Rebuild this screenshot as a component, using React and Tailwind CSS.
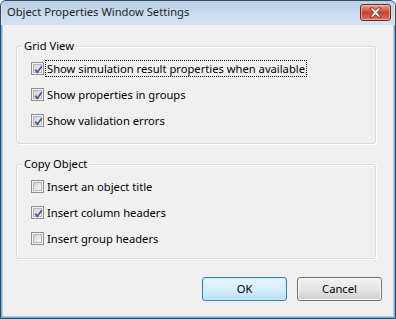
import React from "react";

function CheckBox({ checked }) {
  return (
    <div className="w-[13px] h-[13px] border border-[#8e8f8f] bg-[#f4f4f4] p-[1px] shrink-0">
      <div className="w-full h-full bg-gradient-to-br from-[#c9cdd3] via-[#e4e6e9] to-[#fbfbfb] border border-[#b3b7bd] relative">
        {checked && (
          <svg className="absolute left-[-1px] top-[-1px]" width="11" height="11" viewBox="0 0 11 11">
            <path d="M2.2 5.6 L4.3 8.2 L8.8 2.2" fill="none" stroke="#4b5f93" strokeWidth="1.9" strokeLinecap="butt" strokeLinejoin="miter" />
          </svg>
        )}
      </div>
    </div>
  );
}

function Row({ checked, label, focused }) {
  return (
    <div className="flex items-center h-[17px]">
      <CheckBox checked={checked} />
      <span
        className={
          "ml-[2px] px-[1px] leading-[15px] text-[11.2px] text-black whitespace-nowrap " +
          (focused ? "outline outline-1 outline-dotted outline-black" : "")
        }
      >
        {label}
      </span>
    </div>
  );
}

function Group({ title, heightClass, children }) {
  return (
    <div className={"relative ml-[13px] mr-[17px] border border-[#d5dfe5] rounded-[3px] shadow-[inset_1px_1px_0_#ffffff,1px_1px_0_#ffffff] " + heightClass}>
      <span className="absolute left-[5px] top-[-9px] px-[2px] bg-[#f0f0f0] text-[11.2px] leading-[16px] text-black">
        {title}
      </span>
      <div className="flex flex-col pl-[14px] pt-[13px] gap-[9px]">{children}</div>
    </div>
  );
}

export default function App() {
  return (
    <div
      className="w-[396px] h-[319px] bg-white"
      style={{ fontFamily: '"Noto Sans", "Open Sans", sans-serif' }}
    >
      <div className="w-full h-full flex flex-col border border-[#3b4754] rounded-t-[6px] bg-[#6aaee0] overflow-hidden">
        <div className="h-[24px] shrink-0 flex items-start justify-between bg-gradient-to-b from-[#b9d1ea] to-[#d6e4f3] border-x border-[#dbe8f5]">
          <span className="pl-[5px] pt-[3px] text-[11.2px] leading-[16px] text-[#1e1e1e]">
            Object Properties Window Settings
          </span>
          <div className="mt-[3px] mr-[3px] w-[31px] h-[17px] rounded-[3px] border border-[#6e2a20] bg-gradient-to-b from-[#e6a08f] via-[#c8412b] to-[#d6745f] flex items-center justify-center shadow-[inset_0_0_0_1px_rgba(255,220,210,0.5)]">
            <svg width="13" height="11" viewBox="0 0 13 11">
              <path
                d="M1 1 H4.2 L6.5 3.6 L8.8 1 H12 L8.2 5.5 L12 10 H8.8 L6.5 7.4 L4.2 10 H1 L4.8 5.5 Z"
                fill="#ffffff"
                stroke="#5a2a24"
                strokeWidth="0.8"
              />
            </svg>
          </div>
        </div>
        <div className="flex-1 mx-[1px] mb-[1px] border-x border-b border-[#a8d2f0]">
          <div className="h-full bg-[#f0f0f0] flex flex-col pt-[21px]">
            <Group title="Grid View" heightClass="h-[98px]">
              <Row checked label="Show simulation result properties when available" focused />
              <Row checked label="Show properties in groups" />
              <Row checked label="Show validation errors" />
            </Group>
            <div className="h-[20px] shrink-0" />
            <Group title="Copy Object" heightClass="h-[95px]">
              <Row label="Insert an object title" />
              <Row checked label="Insert column headers" />
              <Row label="Insert group headers" />
            </Group>
            <div className="flex justify-end gap-[10px] pr-[11px] mt-[18px]">
              <button className="w-[85px] h-[24px] rounded-[3px] border border-[#3c7fb1] bg-gradient-to-b from-[#e9f6fd] via-[#d8effc] to-[#b8e0f8] shadow-[inset_0_0_0_1px_#c7ecfd] text-[11.2px] text-black">
                OK
              </button>
              <button className="w-[85px] h-[24px] rounded-[3px] border border-[#707070] bg-gradient-to-b from-[#f2f2f2] via-[#e6e6e6] to-[#cfcfcf] shadow-[inset_0_0_0_1px_#fbfbfb] text-[11.2px] text-black">
                Cancel
              </button>
            </div>
          </div>
        </div>
      </div>
    </div>
  );
}
